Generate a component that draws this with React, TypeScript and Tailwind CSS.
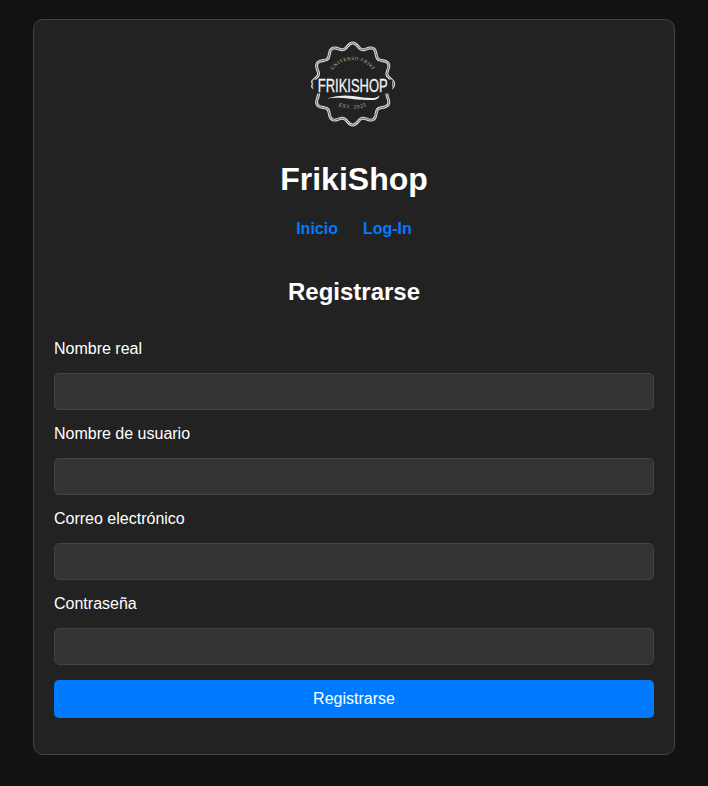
const font = { fontFamily: '"Liberation Sans", Arial, sans-serif' };

// contorno ondulado del sello
function scallop(r: number, amp: number, waves: number) {
  const pts: string[] = [];
  const steps = 240;
  for (let i = 0; i <= steps; i++) {
    const a = (i / steps) * Math.PI * 2;
    const rad = r + amp * Math.cos(a * waves);
    pts.push(`${(50 + rad * Math.sin(a)).toFixed(2)},${(50 - rad * Math.cos(a)).toFixed(2)}`);
  }
  return pts.join(" ");
}

function Logo() {
  const outline = scallop(44.5, 3.2, 12);
  return (
    <svg viewBox="1.5 0 100 100" className="h-[86px] w-[86px]">
      <polygon points={outline} fill="none" stroke="#e0e0e0" strokeWidth="3.4" />
      <polygon points={outline} fill="none" stroke="#555" strokeWidth="1.1" />
      <defs>
        <path id="arcTop" d="M 21 51 A 29 29 0 0 1 79 51" />
        <path id="arcBottom" d="M 24 71 Q 50 87 76 71" />
      </defs>
      <text fill="#b8b8b8" fontSize="5.8" letterSpacing="0.6" fontFamily='"Liberation Serif", serif'>
        <textPath href="#arcTop" startOffset="50%" textAnchor="middle">UNIVERSO FRIKI</textPath>
      </text>
      <rect x="4" y="45" width="92" height="16" fill="#222" />
      <text transform="translate(50 59) scale(0.72 1)" textAnchor="middle" fill="#f4f4f4" stroke="#f4f4f4" strokeWidth="0.3" fontSize="21" fontFamily='"Liberation Sans", sans-serif'>
        FRIKISHOP
      </text>
      <path d="M 20 67 Q 35 62 50 64 Q 68 67 76 66 Q 80 65 81 63 Q 81 68 74 68.5 Q 55 69 45 67 Q 32 65 20 67 Z" fill="#ececec" />
      <text fill="#b8b8b8" fontSize="6.4" letterSpacing="0.8" fontFamily='"Liberation Serif", serif'>
        <textPath href="#arcBottom" startOffset="50%" textAnchor="middle">EST. 2025</textPath>
      </text>
    </svg>
  );
}

function Field({ label, type = "text" }: { label: string; type?: string }) {
  return (
    <div className="flex flex-col">
      <label className="mt-[5px] mb-[15px] text-[16px] leading-[18px] text-white">{label}</label>
      <input
        type={type}
        className="mb-[10px] h-[37px] w-full rounded-[5px] border border-[#444] bg-[#333] px-2.5 text-white outline-none"
      />
    </div>
  );
}

export default function App() {
  return (
    <div className="min-h-[786px] bg-[#121212] pt-[19px]" style={font}>
      <div className="mx-auto h-[736px] w-[642px] rounded-[10px] border border-[#444] bg-[#222] px-5 pt-[21px]">
        <div className="flex justify-center">
          <Logo />
        </div>
        <h1 className="mt-[34px] text-center text-[32px] leading-[37px] font-bold text-white">FrikiShop</h1>
        <nav className="mt-[22px] flex justify-center gap-[25px] text-[16px] leading-[18px] font-bold text-[#007bff]">
          <a href="#">Inicio</a>
          <a href="#">Log-In</a>
        </nav>
        <h2 className="mt-[40px] text-center text-[24px] leading-[28px] font-bold text-white">Registrarse</h2>
        <form className="mt-[29px] flex flex-col">
          <Field label="Nombre real" />
          <Field label="Nombre de usuario" />
          <Field label="Correo electrónico" type="email" />
          <Field label="Contraseña" type="password" />
          <button
            type="button"
            className="mt-[5px] h-[38px] w-full rounded-[5px] bg-[#007bff] text-[16px] text-white"
          >
            Registrarse
          </button>
        </form>
      </div>
    </div>
  );
}
